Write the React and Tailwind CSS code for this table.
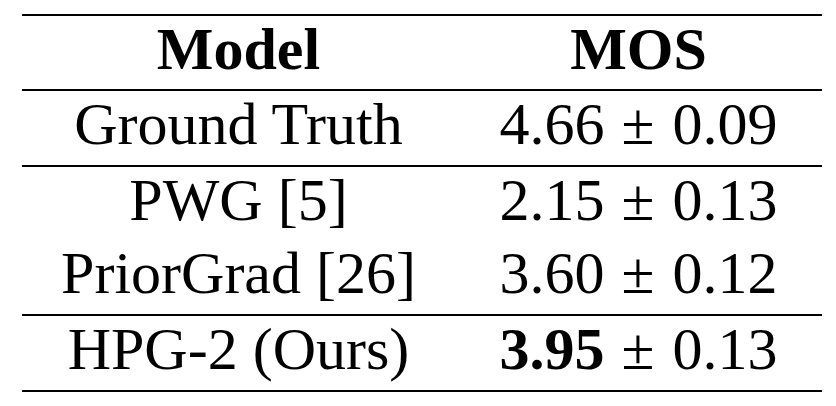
import React from 'react';

const rows = [
  { model: 'Ground Truth', mean: '4.66', std: '0.09', h: 'h-[74px]', rule: true },
  { model: 'PWG [5]', mean: '2.15', std: '0.13', h: 'h-[73px]' },
  { model: 'PriorGrad [26]', mean: '3.60', std: '0.12', h: 'h-[74px]', rule: true },
  { model: 'HPG-2 (Ours)', mean: '3.95', std: '0.13', h: 'h-[74px]', best: true },
];

const Score = ({ mean, std, best }) => (
  <span className="whitespace-nowrap">
    <span className={best ? 'font-bold' : ''}>{mean}</span>
    <span className="ml-[17px] mr-[18px]">±</span>
    {std}
  </span>
);

const App = () => {
  return (
    <div
      className="w-[836px] h-[406px] bg-white text-black pt-[14px] pl-[22px] pr-[14px]"
      style={{ fontFamily: '"Liberation Serif", "Times New Roman", serif' }}
    >
      <div className="border-t-2 border-b-2 border-black text-[60px] leading-[67px]">
        <div className="grid grid-cols-[433px_1fr] h-[73px] border-b-2 border-black font-bold box-content">
          <div className="text-center">Model</div>
          <div className="text-center">MOS</div>
        </div>
        {rows.map((r) => (
          <div
            key={r.model}
            className={`grid grid-cols-[433px_1fr] box-content ${r.h} ${r.rule ? 'border-b-2 border-black' : ''}`}
          >
            <div className="text-center">{r.model}</div>
            <div className="text-center">
              <Score mean={r.mean} std={r.std} best={r.best} />
            </div>
          </div>
        ))}
      </div>
    </div>
  );
};

export default App;
